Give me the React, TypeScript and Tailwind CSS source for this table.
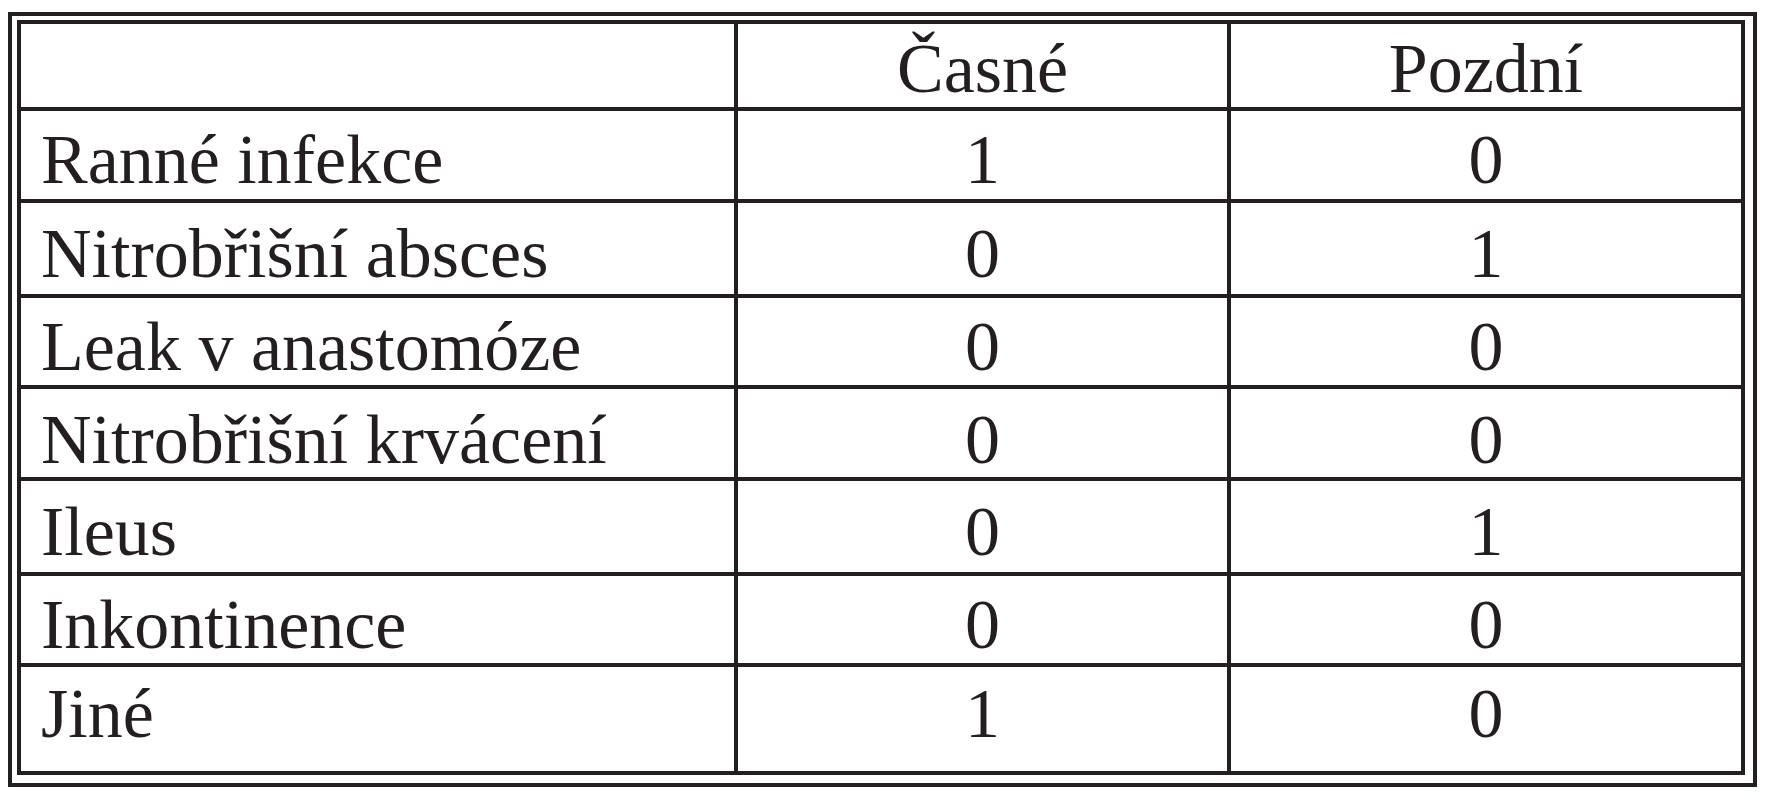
import React from "react";

interface Row {
  label: string;
  early: string;
  late: string;
  h: string;
  pt: string;
}

// row heights include the 4px bottom rule
const rows: Row[] = [
  { label: "Ranné infekce", early: "1", late: "0", h: "h-[92px]", pt: "pt-[14px]" },
  { label: "Nitrobřišní absces", early: "0", late: "1", h: "h-[95px]", pt: "pt-[16px]" },
  { label: "Leak v anastomóze", early: "0", late: "0", h: "h-[91px]", pt: "pt-[14px]" },
  { label: "Nitrobřišní krvácení", early: "0", late: "0", h: "h-[92px]", pt: "pt-[16px]" },
  { label: "Ileus", early: "0", late: "1", h: "h-[95px]", pt: "pt-[16px]" },
  { label: "Inkontinence", early: "0", late: "0", h: "h-[91px]", pt: "pt-[14px]" },
  { label: "Jiné", early: "1", late: "0", h: "h-[104px]", pt: "pt-[12px]" },
];

export default function App() {
  return (
    <div
      className="w-[1774px] h-[800px] bg-white text-[#231f20] overflow-hidden"
      style={{ fontFamily: '"Liberation Serif", "Times New Roman", serif' }}
    >
      {/* Outer frame */}
      <div className="ml-[8px] mt-[12px] w-[1749px] h-[775px] border-4 border-[#231f20] pl-[5px] pt-[4px]">
        {/* Table */}
        <div className="w-[1728px] h-[755px] border-4 border-[#231f20] flex flex-col text-[70px] leading-[70px]">
          {/* Header */}
          <div className="flex h-[87px] border-b-4 border-[#231f20]">
            <div className="w-[713px]" />
            <div className="w-[493px] border-l-4 border-[#231f20] text-center pt-[10px]">
              Časné
            </div>
            <div className="flex-1 border-l-4 border-[#231f20] text-center pt-[10px]">
              Pozdní
            </div>
          </div>

          {rows.map((row, i) => (
            <div
              key={row.label}
              className={`flex ${row.h} ${
                i < rows.length - 1 ? "border-b-4 border-[#231f20]" : ""
              }`}
            >
              <div className={`w-[713px] pl-[20px] whitespace-nowrap ${row.pt}`}>
                {row.label}
              </div>
              <div className={`w-[493px] border-l-4 border-[#231f20] text-center ${row.pt}`}>
                {row.early}
              </div>
              <div className={`flex-1 border-l-4 border-[#231f20] text-center ${row.pt}`}>
                {row.late}
              </div>
            </div>
          ))}
        </div>
      </div>
    </div>
  );
}
